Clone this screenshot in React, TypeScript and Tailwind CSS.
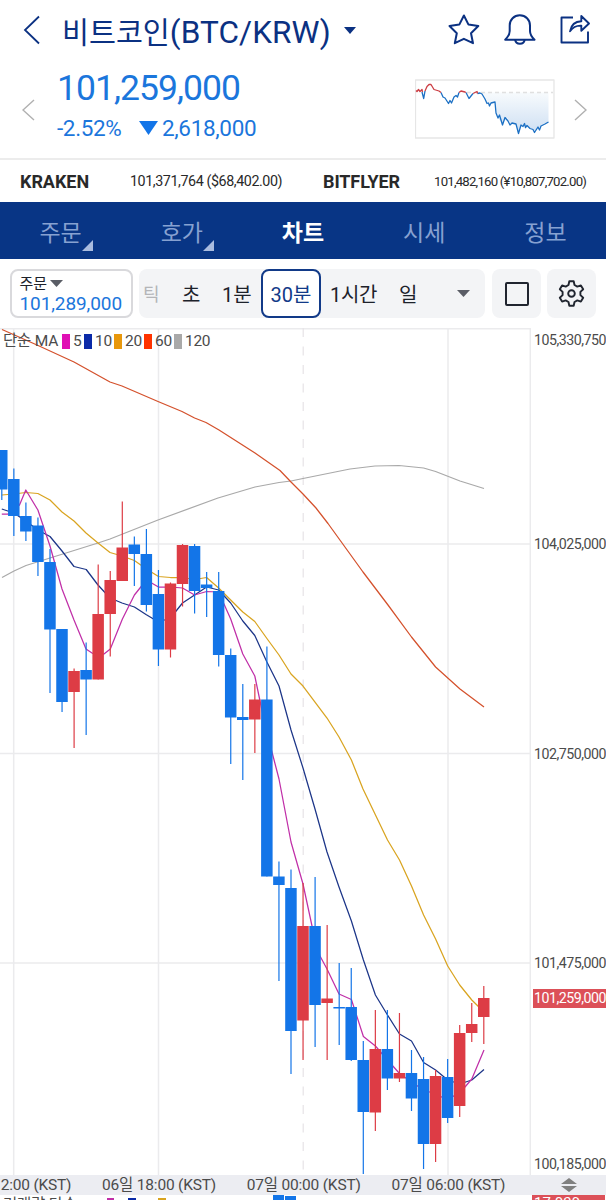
import React from "react";

const STEP = 12.05;
const FIRST_X = 1.8;
const UP = "#dd3c45";
const DOWN = "#1375e8";

// [high, body top, body bottom, low, rising]
const candles: [number, number, number, number, number][] = [
  [450, 450, 489.5, 500, 0],
  [468.5, 479, 516, 536, 0],
  [502.5, 516, 531.5, 541, 0],
  [517.5, 525.5, 562, 576, 0],
  [549, 562, 629.5, 693, 0],
  [629, 629, 702, 712, 0],
  [668.5, 671, 692, 748, 1],
  [642.5, 670, 679.5, 735, 0],
  [564.5, 614, 679.5, 679.5, 1],
  [571, 580, 614, 656.5, 1],
  [501.5, 547.5, 581, 581, 1],
  [536.5, 544.5, 554, 586, 0],
  [529, 554, 605, 611.5, 0],
  [570, 594, 649.5, 666, 0],
  [582.5, 583.5, 649.5, 657.5, 1],
  [544, 545, 584, 606.5, 1],
  [544, 546, 591, 613.5, 0],
  [572, 584.5, 588, 617, 0],
  [572, 591, 655, 666.5, 0],
  [648.5, 655, 717.5, 764, 0],
  [684, 717, 720, 780, 0],
  [684, 699.5, 719.5, 753, 1],
  [646.5, 699.5, 876.5, 876.5, 0],
  [861.5, 876.5, 885, 981, 0],
  [869.5, 888, 1031, 1074, 0],
  [883, 926, 1020.5, 1060, 1],
  [877, 926, 1005, 1047, 0],
  [925, 998.5, 1003, 1060, 1],
  [963, 1007, 1008.5, 1045, 0],
  [968, 1007, 1060, 1061, 0],
  [1041, 1060, 1112, 1174, 0],
  [1010, 1049, 1112.5, 1131, 1],
  [1010, 1049, 1078.5, 1090, 0],
  [1013, 1073, 1078.5, 1082, 1],
  [1050, 1073, 1098.5, 1111, 0],
  [1057, 1079, 1144, 1169, 0],
  [1070, 1076, 1144, 1162, 1],
  [1059, 1077, 1118, 1123, 0],
  [1025, 1033, 1106, 1117, 1],
  [1003, 1024, 1033, 1042, 1],
  [986, 998, 1017, 1044, 1],
];

const averages = [
  {
    color: "#a9a9a9",
    points:
      "2,577.5 14,571 26,565.5 74,550.5 98,543 110,539 158,520 218,498 255,487 279,482.5 291,481 303,478.5 350,469 375,466 399,465.5 423.6,468 435.6,471.5 460,481 484,488.5",
  },
  {
    color: "#d4512c",
    points:
      "2,329.5 37,345 74,362 110,382 122,386 158,401.5 182,411.5 194.6,418 206,422.5 219,430 255,453 280,470.5 291,482 303,494 316,508 328,523.5 363,572 388,605 411.5,637 435.6,667 460,689 484,707",
  },
  {
    color: "#d9a420",
    points:
      "1.8,495 13.8,494 25.8,492.5 37.9,493.5 50,500 62,512 74,521 86,533 98,543 110,552.5 122,556 134.4,560.5 146.4,569 158.5,576.5 170.5,577.5 182,577.5 194.6,579.5 206.6,577.5 218.6,588 230.7,600 242.8,612 254.8,621.5 266.9,638.5 279,655 291,674 303,686 315,702 327,718 339,737 351.4,760 363,789 375,814 387.5,840 399.5,860 411.5,886 423.6,915 435.6,939 447.7,966 459.7,985 471.8,1000 484,1012",
  },
  {
    color: "#1c3588",
    points:
      "1.8,509 13.8,513 25.8,521 37.9,530 50,536.5 62,551 74,566.5 86.2,569.5 98,585 110,598 122,603 134.4,607 146,614.5 158.5,622 170.5,618 182.5,603 194.6,595 206.6,587 218.6,590 230.7,603 242.8,621 254.8,635.5 266.9,662 279,686 291,730 303,768 315,809 327,852 339,887 351.4,921 363.4,960 375.4,995 387.5,1015 399.5,1034 411.5,1041 423.6,1062.5 435.6,1070 447.7,1080 459.7,1084 471.8,1080 484,1069.5",
  },
  {
    color: "#c02fa8",
    points:
      "1.8,514 8,514 19.5,505 25.8,490 37.9,510 50,546 62,589 74,620 86,649 92,653 98,656 104,654 110.3,649 122.4,619 134.4,595 146.4,580 158.5,587 170.5,587 182.5,588 194.6,595 206.6,591.5 218.6,592 230.7,619 242.8,654 254.8,676 266.9,734 272.5,754 279,779 291,842 303,884 315,940 320,956 327,969 339,994 351.4,999.5 363.4,1036.5 375.4,1046 387.5,1060 399.5,1073.5 411.5,1082 423.6,1090 435.6,1094 447.7,1100 459.7,1092 465,1087 471.8,1079 484,1050",
  },
];

const legend = [
  { label: "5", swatch: "bg-[#e010b4]", box: "w-[22px]" },
  { label: "10", swatch: "bg-[#0a2aa8]", box: "w-[30px]" },
  { label: "20", swatch: "bg-[#e8980c]", box: "w-[30px]" },
  { label: "60", swatch: "bg-[#ff3300]", box: "w-[30px]" },
  { label: "120", swatch: "bg-[#a9a9a9]", box: "w-[40px]" },
];

const tabs = [
  { label: "주문", corner: true, active: false },
  { label: "호가", corner: true, active: false },
  { label: "차트", corner: false, active: true },
  { label: "시세", corner: false, active: false },
  { label: "정보", corner: false, active: false },
];

const times = ["06일 12:00 (KST)", "06일 18:00 (KST)", "07일 00:00 (KST)", "07일 06:00 (KST)"];

function Header() {
  return (
    <header className="flex h-[160px] flex-col border-b-2 border-[#ececec]">
      <div className="flex h-[60px] items-center pl-[23px] text-[#0b3182]">
        <svg className="h-[30px] w-[18px] shrink-0" viewBox="0 0 18 30" fill="none" stroke="currentColor" strokeWidth="1.8">
          <path d="M16 1.5 2 15 16 28.5" />
        </svg>
        <h1 className="ml-[21px] flex w-[273px] shrink-0 items-baseline whitespace-nowrap pt-[5px] leading-none">
          <span className="text-[29.3px]">비트코인</span>
          <span className="text-[31.5px] tracking-[0.1px]">(BTC/KRW)</span>
        </h1>
        <svg className="ml-[9px] h-[7px] w-3 shrink-0" viewBox="0 0 12 7" fill="currentColor">
          <path d="M0 0h12L6 7z" />
        </svg>
        <svg className="ml-[92px] h-8 w-8 shrink-0" viewBox="0 0 32 32" fill="none" stroke="currentColor" strokeWidth="2" strokeLinejoin="round">
          <path d="M15.9 1.5 20.5 10.6 30.3 12 23 19.2 25 29.2 15.9 24.8 6.8 29.2 8.8 19.2 1.5 12 11.3 10.6z" />
        </svg>
        <svg className="ml-6 h-8 w-8 shrink-0" viewBox="0 0 32 32" fill="none" stroke="currentColor" strokeWidth="2" strokeLinejoin="round">
          <path d="M1.2 25.7C4.5 22.5 5.7 20.5 5.7 17v-5.5C5.7 5.7 10 1.3 15.8 1.3S26 5.7 26 11.5V17c0 3.5 1.2 5.5 4.5 8.7z" />
          <path d="M11.2 25.8c.3 2.5 2.2 3.9 4.7 3.9s4.4-1.4 4.7-3.9" />
        </svg>
        <svg className="ml-[23px] h-8 w-8 shrink-0" viewBox="0 0 32 32" fill="none" stroke="currentColor" strokeWidth="1.9" strokeLinejoin="round">
          <path d="M14 3.5H2.5v25h26.500V17.500" />
          <path d="M11 17.3C12.2 10.7 16 7.3 22.3 7.2V2l7.700 7.500-7.700 7.300v-5.200c-4.600-.2-8.500 1.500-11.300 5.700z" />
        </svg>
      </div>
      <div className="flex h-[98px] items-center">
        <svg className="ml-[22px] mt-0.5 h-[22px] w-[13px]" viewBox="0 0 13 22" fill="none" stroke="#b0b0b0" strokeWidth="1.4">
          <path d="M12 1 1 11 12 21" />
        </svg>
        <div className="ml-[22px] h-[80px] w-[358px] text-[#1b76dc]">
          <div className="text-[35.5px] leading-[38px] tracking-[-0.95px]">101,259,000</div>
          <div className="mt-2 flex items-center text-[22.5px] leading-[26px] tracking-[-0.35px]">
            <span className="w-[82px]">-2.52%</span>
            <svg className="h-[14px] w-[19px]" viewBox="0 0 19 14" fill="#1375e8">
              <path d="M0 0h19L9.500 14z" />
            </svg>
            <span className="ml-1">2,618,000</span>
          </div>
        </div>
        <Sparkline />
        <svg className="ml-[19px] mt-0.5 h-[22px] w-[13px]" viewBox="0 0 13 22" fill="none" stroke="#b0b0b0" strokeWidth="1.4">
          <path d="M1 1 12 11 1 21" />
        </svg>
      </div>
    </header>
  );
}

function Sparkline() {
  return (
    <svg className="h-[60px] w-[140px]" viewBox="415 79 140 60" fill="none" strokeWidth="1.3" strokeLinejoin="round">
      <defs>
        <linearGradient id="fall" x1="0" y1="92" x2="0" y2="132" gradientUnits="userSpaceOnUse">
          <stop offset="0" stopColor="#f8fbfd" />
          <stop offset="1" stopColor="#cfe0f3" />
        </linearGradient>
      </defs>
      <rect x="415.5" y="80" width="138.5" height="58" stroke="#e6e6e6" />
      <path fill="url(#fall)" d="M478 92.5 484 94 488 104 494 102 496 109 498 118 502 123 507 118 511 124 516 124 518 133 522 125 529 127 535 131 541 126 548.5 122V92.5z" />
      <path d="M467 92.5h86" stroke="#e0e0e0" strokeDasharray="4 3" />
      <path stroke="#1c70c4" d="M422 92 423.700 98.500 425 91M441 92.500 443 97 445 98 448.500 103.500 450 100.500 451.500 103 454 97 456 95.500 457.500 97 459 92.500M466 92.500 469 98.500 473 93.500M477.500 93.500 480 93 482 94 485 99 487 103.500 488.500 103 489.500 106 491 103 495 102 496 113 498 118 499.500 115 502.500 125 505 117.500 508 121 510 125 512 123 516 124 518.500 133.500 521 125 523 126.500 524.500 123.500 525.500 127.500 527 125.500 530 128.500 533 129.500 534.500 132.500 538 127 539.500 130 541 126 545 124 548.500 122" />
      <path stroke="#cc3f45" d="M416 90.500 417 91.500 418.500 89.500 420 91.500 422 89.500 422.500 92M425 91 427 86.500 429 84.500 431 84.500 434 89.500 439 91 441 92.500M459 92.500 461 91 465 92 466 92.500M473 93.500 477 91.500 477.500 93.500" />
    </svg>
  );
}

function Exchanges() {
  return (
    <div className="flex h-[42px] shrink-0 items-center whitespace-nowrap pl-5 text-[#292929]">
      <strong className="w-[110px] text-[18px] font-bold tracking-[-0.05px]">KRAKEN</strong>
      <span className="w-[193px] pt-px text-[14.3px] tracking-[-0.42px]">101,371,764 ($68,402.00)</span>
      <strong className="w-[111px] text-[18px] font-bold tracking-[-0.1px]">BITFLYER</strong>
      <span className="pt-px text-[13.2px] tracking-[-0.78px]">101,482,160 (¥10,807,702.00)</span>
    </div>
  );
}

function Tabs() {
  return (
    <nav className="grid h-[57px] shrink-0 grid-cols-5 bg-[#083585] pt-[7px]">
      {tabs.map((t) => (
        <div
          key={t.label}
          className={
            t.active
              ? "flex items-center justify-center text-[23px] font-bold text-white"
              : "flex items-center justify-center text-[23px] text-[#87a1d1]"
          }
        >
          <span className="relative">
            {t.label}
            {t.corner && (
              <svg className="absolute -right-[11px] bottom-0 h-[11px] w-[11px]" viewBox="0 0 11 11" fill="#a9bce0">
                <path d="M11 0v11H0z" />
              </svg>
            )}
          </span>
        </div>
      ))}
    </nav>
  );
}

function Toolbar() {
  return (
    <div className="flex h-[69px] shrink-0 items-center whitespace-nowrap pl-[10px] text-[#1d222b]">
      <div className="flex h-[49px] w-[123px] flex-col justify-center rounded-lg border-2 border-[#d9d9dc] pl-[7.5px] pt-[2px]">
        <div className="flex items-center text-[15px] leading-[19px]">
          주문
          <svg className="mb-0.5 ml-[3px] h-[7px] w-[13px]" viewBox="0 0 13 7" fill="#5a5d66">
            <path d="M0 0h13L6.500 7z" />
          </svg>
        </div>
        <div className="text-[19px] leading-[20px] tracking-[-0.1px] text-[#1b76dc]">101,289,000</div>
      </div>
      <div className="ml-[6px] flex h-[49px] w-[346px] items-center rounded-lg bg-[#f3f4f6] text-[20px]">
        <span className="w-[43px] pl-1 pt-0.5 text-[18px] text-[#b4b5b8]">틱</span>
        <span className="w-[40px] pt-0.5">초</span>
        <span className="w-[39px] pt-0.5">1분</span>
        <span className="flex h-[49px] w-[60px] items-center justify-center rounded-lg border-2 border-[#123a88] bg-white pt-0.5 text-[#123a88]">30분</span>
        <span className="ml-[9px] w-[69px] pt-0.5 tracking-[-0.3px]">1시간</span>
        <span className="w-[58px] pt-0.5">일</span>
        <svg className="h-[7px] w-[13px]" viewBox="0 0 13 7" fill="#5a5d66">
          <path d="M0 0h13L6.500 7z" />
        </svg>
      </div>
      <div className="ml-[7px] flex size-[49px] items-center justify-center rounded-lg bg-[#f3f4f6]">
        <div className="size-[24px] rounded-[2px] border-2 border-[#20252f]" />
      </div>
      <div className="ml-[6px] flex size-[49px] items-center justify-center rounded-lg bg-[#f3f4f6]">
        <svg className="size-[27px]" viewBox="0 0 27 27" fill="none" stroke="#20252f" strokeWidth="1.9" strokeLinejoin="round">
          <path d="M11.300 1.300h4.400l.800 3.700 2.800 1.600 3.600-1.200 2.300 3.900-2.800 2.600v3.200l2.800 2.600-2.300 3.900-3.600-1.200-2.800 1.600-.800 3.700h-4.400l-.800-3.700-2.800-1.600-3.600 1.200-2.300-3.900 2.800-2.600v-3.200L1.800 9.300l2.300-3.900 3.600 1.200L10.500 5z" />
          <circle cx="13.500" cy="13.500" r="3.300" />
        </svg>
      </div>
    </div>
  );
}

function Chart() {
  return (
    <div className="relative h-[847px] w-[531px] shrink-0">
      <svg className="block h-[847px] w-[531px]" viewBox="0 328 531 847" fill="none">
        <path stroke="#ebebed" strokeWidth="1.5" d="M0 328.700H531M0 544H531M0 753.500H531M0 963H531M13.700 329V1175M158.500 329V1175M448 329V1175M530.300 329V1175" />
        <path stroke="#e6e3e6" strokeWidth="1.2" strokeDasharray="9 9.5" d="M303.200 328V1175" />
        {averages.map((a) => (
          <polyline key={a.color} points={a.points} stroke={a.color} strokeWidth="1.25" strokeLinejoin="round" />
        ))}
        {candles.map(([high, top, bottom, low, rising], i) => {
          const x = FIRST_X + i * STEP;
          const color = rising ? UP : DOWN;
          return (
            <g key={i}>
              <path d={`M${x} ${high}V${low}`} stroke={color} strokeWidth="1.2" />
              <rect x={x - 5.8} y={top} width="11.5" height={bottom - top} fill={color} />
            </g>
          );
        })}
      </svg>
      <div className="absolute left-[3px] top-[4px] flex items-center whitespace-nowrap text-[15.5px] leading-[18px] text-[#4b4b4b]">
        <span className="w-[59px] tracking-[-0.2px]">단순 MA</span>
        {legend.map((l) => (
          <span key={l.label} className={`flex items-center tracking-[-0.3px] ${l.box}`}>
            <span className={`mr-[3px] h-[15px] w-2 shrink-0 ${l.swatch}`} />
            {l.label}
          </span>
        ))}
      </div>
    </div>
  );
}

function PriceAxis() {
  return (
    <div className="relative flex-1 whitespace-nowrap pl-[3px] text-[14.2px] leading-4 tracking-[-0.48px] text-[#4b4b4b]">
      <div className="pt-1">105,330,750</div>
      <div className="mt-[188px]">104,025,000</div>
      <div className="mt-[194px]">102,750,000</div>
      <div className="mt-[193px]">101,475,000</div>
      <div className="mt-[185px]">100,185,000</div>
      <div className="absolute left-[2px] right-0 top-[661px] h-[19px] bg-[#dc5058] pl-px leading-[19px] text-white">101,259,000</div>
    </div>
  );
}

function TimeAxis() {
  return (
    <div className="flex h-5 shrink-0 items-center overflow-hidden whitespace-nowrap bg-[#ecedf2] text-[15.5px] leading-5 tracking-[-0.2px] text-[#4b4b4b]">
      <div className="-ml-[58px] flex">
        {times.map((t) => (
          <span key={t} className="w-[144.7px] text-center">
            {t}
          </span>
        ))}
      </div>
      <svg className="ml-[40px] h-[14px] w-[16px]" viewBox="0 0 16 14" fill="#808080">
        <path d="M0 6 8 0l8 6zM0 8h16l-8 6z" />
      </svg>
    </div>
  );
}

function VolumePanel() {
  return (
    <div className="flex h-[5px] shrink-0 overflow-hidden whitespace-nowrap text-[15.5px] leading-[18px] text-[#4b4b4b]">
      <span className="w-[107px] pl-[3px] pt-px tracking-[-0.2px]">거래량 단순</span>
      <span className="mt-[3px] h-4 w-[7px] bg-[#c02fa8]" />
      <span className="ml-[14px] mt-[3px] h-4 w-2 bg-[#0a2aa8]" />
      <span className="ml-[22px] mt-[3px] h-4 w-2 bg-[#d9a420]" />
      <span className="ml-[107px] h-4 w-[11px] bg-[#1375e8]" />
      <span className="ml-px mt-px h-4 w-[11px] bg-[#1375e8]" />
      <span className="ml-[236px] w-[73px] bg-[#dc5058] pl-[2px] text-[15px] leading-4 text-white">17.039</span>
    </div>
  );
}

export default function App() {
  return (
    <main className="flex h-[1200px] w-[606px] flex-col overflow-hidden bg-white font-['Roboto','Noto_Sans_CJK_KR',sans-serif]">
      <Header />
      <Exchanges />
      <Tabs />
      <Toolbar />
      <div className="flex shrink-0">
        <Chart />
        <PriceAxis />
      </div>
      <TimeAxis />
      <VolumePanel />
    </main>
  );
}
